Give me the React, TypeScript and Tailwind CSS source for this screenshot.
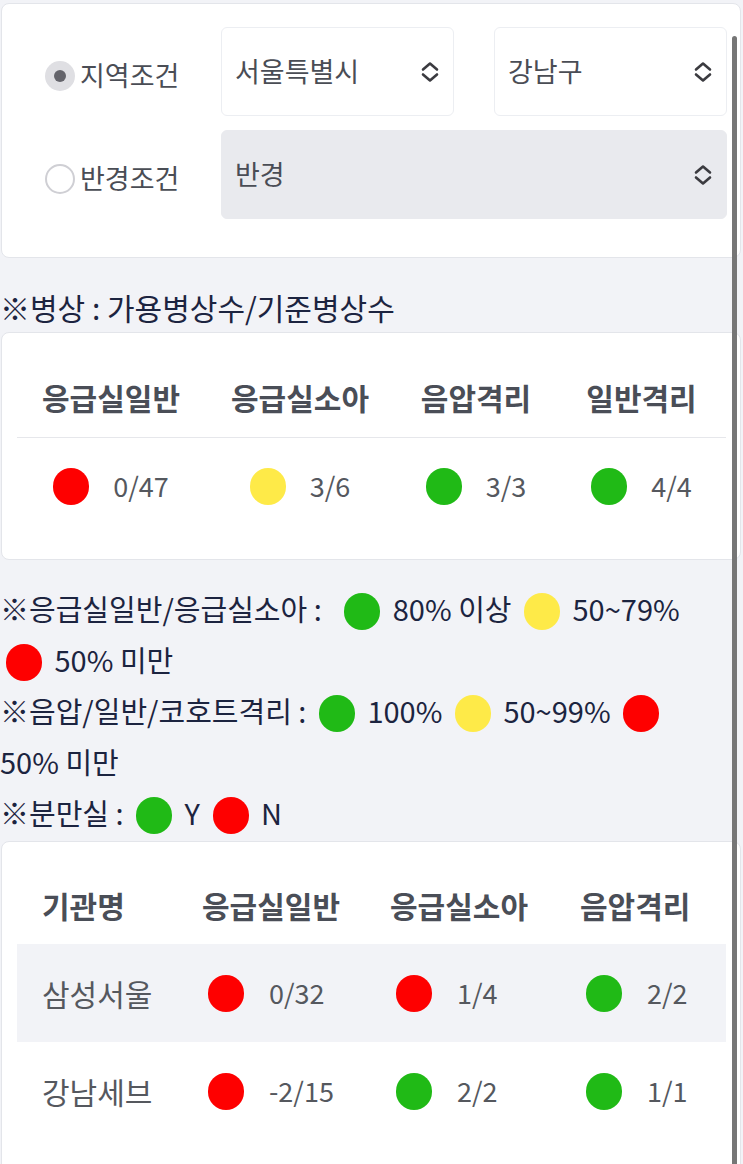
import React from 'react';

type Level = 'red' | 'yellow' | 'green';

const dotColor: Record<Level, string> = {
  red: 'bg-[#fe0000]',
  yellow: 'bg-[#feea48]',
  green: 'bg-[#20ba16]',
};

function Dot({ level, className = '' }: { level: Level; className?: string }) {
  return <span className={`inline-block w-[36px] h-[37px] rounded-full shrink-0 ${dotColor[level]} ${className}`} />;
}

function UpDown() {
  return (
    <svg width="18" height="22" viewBox="0 0 18 22" fill="none" stroke="#3b3b40" strokeWidth="2.6" strokeLinecap="round" strokeLinejoin="round">
      <path d="M2 8.5 L9 2.5 L16 8.5" />
      <path d="M2 13.5 L9 19.5 L16 13.5" />
    </svg>
  );
}

function Select({ value, disabled = false, className = '' }: { value: string; disabled?: boolean; className?: string }) {
  return (
    <div
      className={`h-[89px] rounded-md border flex items-center justify-between pl-[13px] pr-[14px] text-[27px] text-[#4a4d55] ${
        disabled ? 'bg-[#e9eaee] border-[#e9eaee]' : 'bg-white border-[#eceef2]'
      } ${className}`}
    >
      <span>{value}</span>
      <UpDown />
    </div>
  );
}

function Radio({ checked, label }: { checked: boolean; label: string }) {
  return (
    <div className="flex items-center gap-[5px] pt-[8px]">
      {checked ? (
        <span className="w-[30px] h-[30px] rounded-full bg-[#dfdfe3] flex items-center justify-center">
          <span className="w-[12px] h-[12px] rounded-full bg-[#64646b]" />
        </span>
      ) : (
        <span className="w-[30px] h-[30px] rounded-full bg-white border-2 border-[#cfcfd4]" />
      )}
      <span className="text-[27px] text-[#4a4d55]">{label}</span>
    </div>
  );
}

const beds: { name: string; level: Level; value: string }[] = [
  { name: '응급실일반', level: 'red', value: '0/47' },
  { name: '응급실소아', level: 'yellow', value: '3/6' },
  { name: '음압격리', level: 'green', value: '3/3' },
  { name: '일반격리', level: 'green', value: '4/4' },
];

const hospitals: { name: string; cells: [Level, string][] }[] = [
  { name: '삼성서울', cells: [['red', '0/32'], ['red', '1/4'], ['green', '2/2']] },
  { name: '강남세브', cells: [['red', '-2/15'], ['green', '2/2'], ['green', '1/1']] },
];

export default function App() {
  return (
    <div className="min-h-[1164px] bg-[#f2f3f7] pt-[3px] font-['Noto_Sans_CJK_KR','Noto_Sans',sans-serif] overflow-hidden">
      {/* search conditions */}
      <div className="ml-[1px] w-[740px] bg-white border border-[#e3e5ea] rounded-lg pt-[23px] pb-[38px] pl-[43px] pr-[13px]">
        <div className="flex gap-[10px]">
          <div className="w-[166px] flex flex-col">
            <div className="h-[89px] flex items-center">
              <Radio checked label="지역조건" />
            </div>
            <div className="h-[89px] mt-[14px] flex items-center">
              <Radio checked={false} label="반경조건" />
            </div>
          </div>
          <div className="flex-1 flex flex-col gap-[14px]">
            <div className="flex gap-[40px]">
              <Select value="서울특별시" className="flex-1" />
              <Select value="강남구" className="flex-1" />
            </div>
            <Select value="반경" disabled />
          </div>
        </div>
      </div>

      <p className="mt-[26px] text-[30px] leading-[46px] text-[#1c2440]">※병상 : 가용병상수/기준병상수</p>

      {/* bed summary */}
      <div className="mt-[2px] ml-[1px] w-[740px] bg-white border border-[#e3e5ea] rounded-lg pt-[25px] pb-[25px] pl-[15px] pr-[14px]">
        <div className="grid grid-cols-[188px_190px_162px_1fr] h-[80px] items-center border-b border-[#e6e7eb] text-center">
          {beds.map((b) => (
            <span key={b.name} className="text-[30px] font-bold text-[#4a4e57]">{b.name}</span>
          ))}
        </div>
        <div className="grid grid-cols-[188px_190px_162px_1fr] h-[96px] items-center">
          {beds.map((b) => (
            <div key={b.name} className="flex items-center justify-center gap-[24px]">
              <Dot level={b.level} />
              <span className="text-[27px] text-[#55585e]">{b.value}</span>
            </div>
          ))}
        </div>
      </div>

      {/* legend */}
      <div className="mt-[23px] text-[29px] leading-[51px] text-[#1c2440] break-keep">
        <p>
          ※응급실일반/응급실소아 : <Dot level="green" className="align-middle ml-[16px] mr-[6px] -mt-[4px]" /> 80% 이상{' '}
          <Dot level="yellow" className="align-middle mx-[6px] -mt-[4px]" /> 50~79%{' '}
          <span className="whitespace-nowrap">
            <Dot level="red" className="align-middle mx-[6px] -mt-[4px]" /> 50% 미만
          </span>
        </p>
        <p>
          ※음압/일반/코호트격리 : <Dot level="green" className="align-middle mx-[6px] -mt-[4px]" /> 100%{' '}
          <Dot level="yellow" className="align-middle mx-[6px] -mt-[4px]" /> 50~99%{' '}
          <Dot level="red" className="align-middle mx-[6px] -mt-[4px]" />{' '}
          <span className="whitespace-nowrap">50% 미만</span>
        </p>
        <p>
          ※분만실 : <Dot level="green" className="align-middle mx-[6px] -mt-[4px]" /> Y{' '}
          <Dot level="red" className="align-middle mx-[6px] -mt-[4px]" /> N
        </p>
      </div>

      {/* hospital list */}
      <div className="mt-[3px] ml-[1px] w-[740px] bg-white border border-[#e3e5ea] rounded-lg pt-[25px] pb-[60px] pl-[15px] pr-[14px]">
        <div className="grid grid-cols-[160px_188px_190px_1fr] pl-[25px] h-[77px] items-center">
          {['기관명', '응급실일반', '응급실소아', '음압격리'].map((h) => (
            <span key={h} className="text-[30px] font-bold text-[#4a4e57]">{h}</span>
          ))}
        </div>
        {hospitals.map((h, i) => (
          <div
            key={h.name}
            className={`grid grid-cols-[160px_188px_190px_1fr] pl-[25px] h-[98px] items-center ${i === 0 ? 'bg-[#f2f3f7]' : ''}`}
          >
            <span className="text-[30px] text-[#55585e]">{h.name}</span>
            {h.cells.map(([lv, v], j) => (
              <div key={j} className="flex items-center gap-[25px] pl-[6px]">
                <Dot level={lv} />
                <span className="text-[27px] text-[#55585e]">{v}</span>
              </div>
            ))}
          </div>
        ))}
      </div>

      {/* scrollbar thumb */}
      <div className="fixed right-[6px] top-[36px] bottom-0 w-[5px] rounded-t-full bg-[#767676]" />
    </div>
  );
}
